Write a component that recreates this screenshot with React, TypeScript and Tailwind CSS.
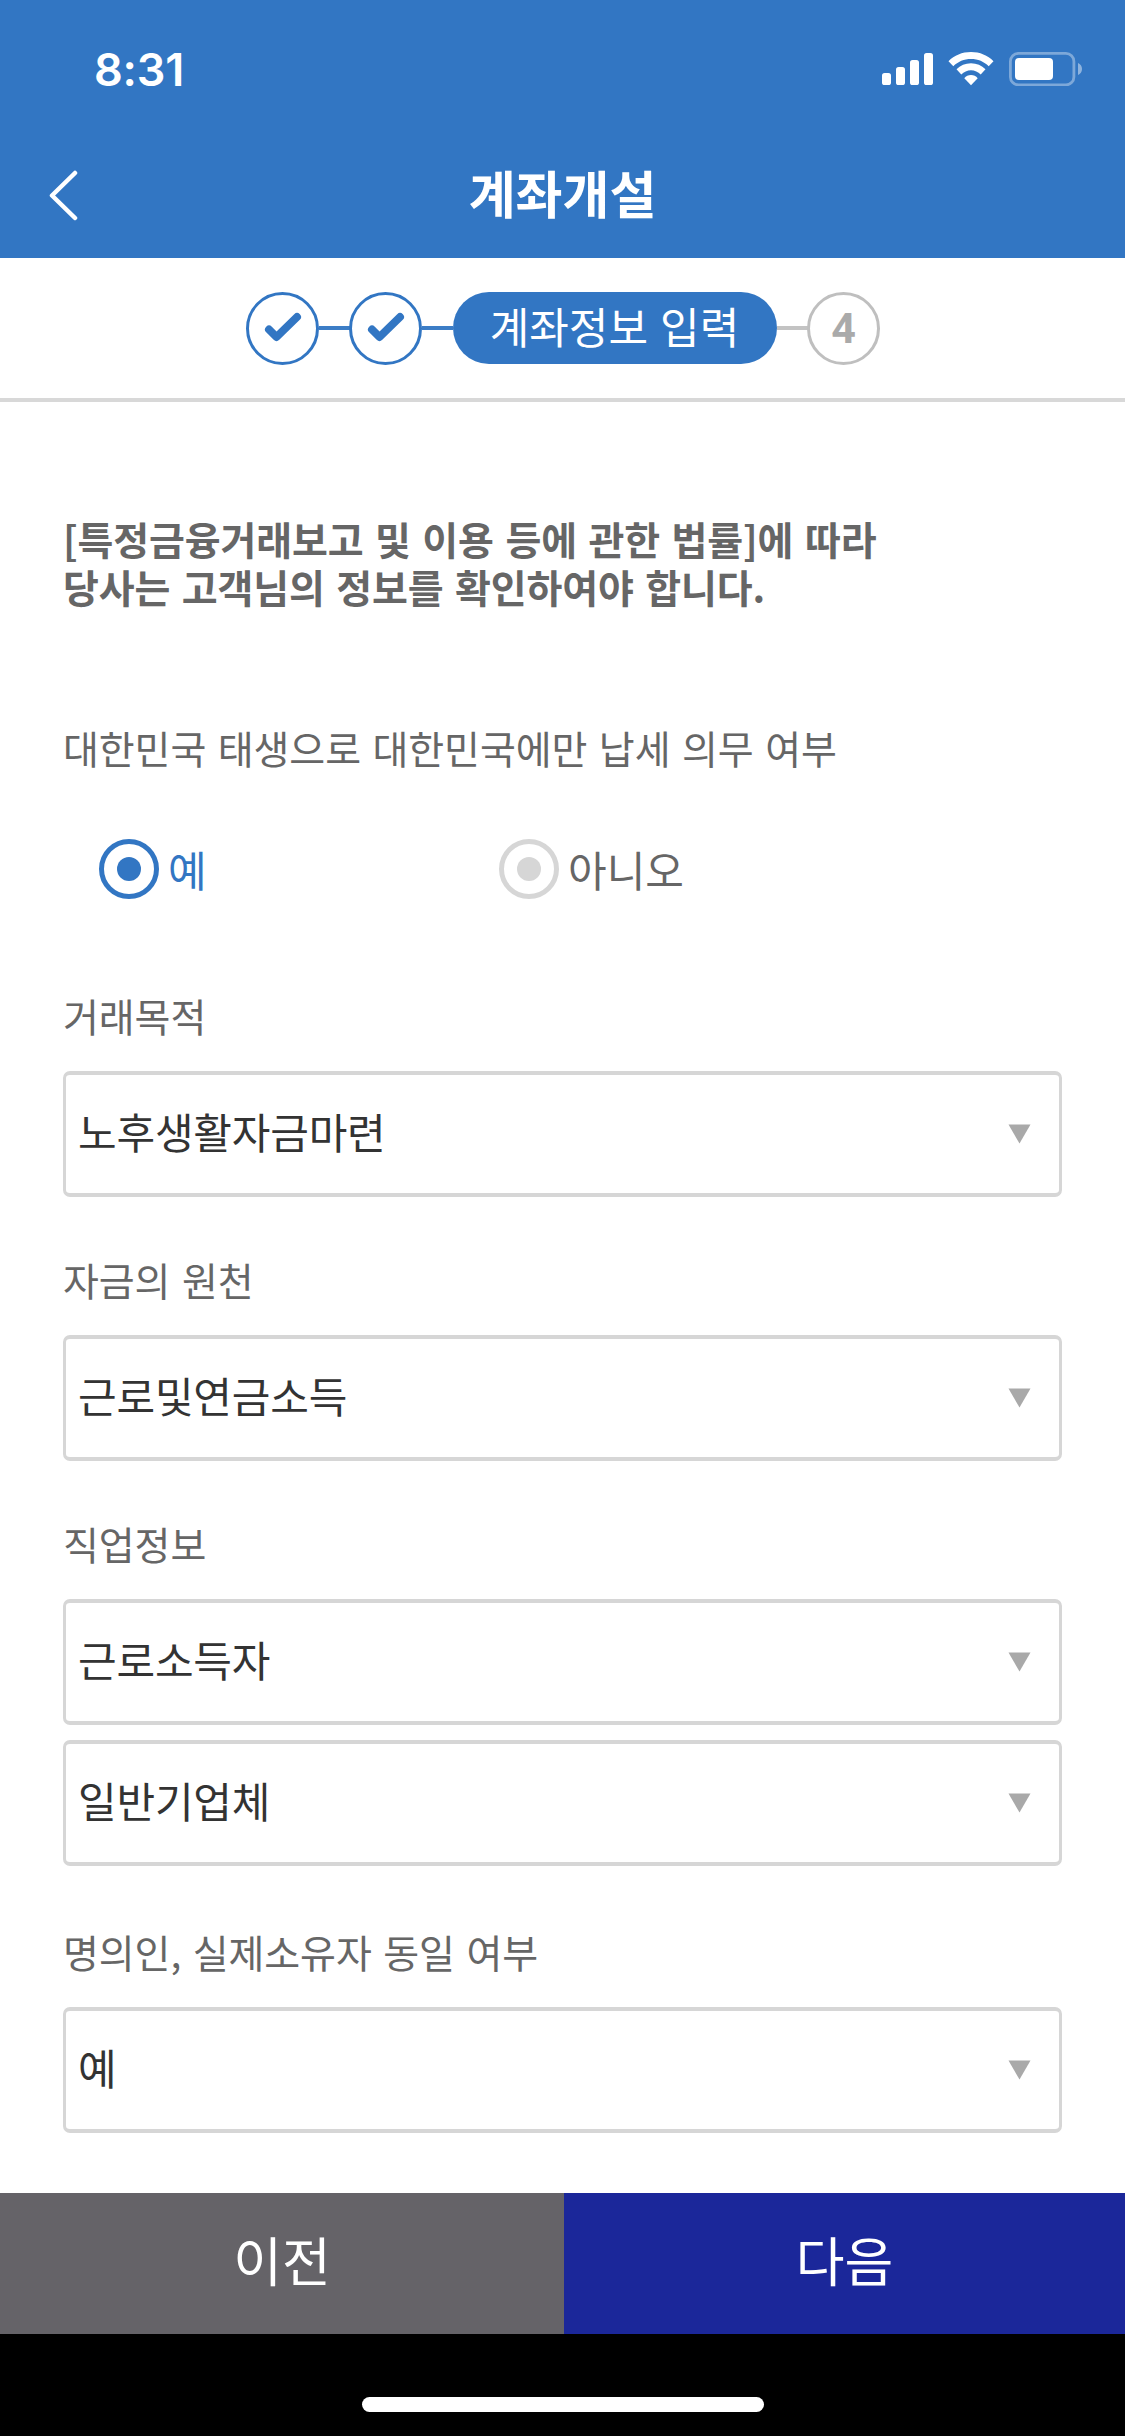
import type { ReactNode } from "react";

function StatusBar() {
  return (
    <div className="flex h-[138px] items-center pl-[94px] pr-[43px]">
      <div className="flex-1 font-['Inter'] text-[45px] font-semibold leading-none tracking-[-0.2px]">8:31</div>
      <svg width="200" height="34" viewBox="0 0 200 34" fill="#fff">
        <rect x="0" y="21" width="9" height="12" rx="2.6" />
        <rect x="14" y="15" width="9" height="18" rx="2.6" />
        <rect x="28" y="8" width="9" height="25" rx="2.6" />
        <rect x="42" y="1" width="9" height="32" rx="2.6" />
        <g transform="translate(66.5 0)">
          <path d="M22.5 0C31.300 0 39.200 3.300 45 9.200L40.200 14.200C35.600 9.600 29.400 7 22.500 7S9.400 9.600 4.800 14.200L0 9.200C5.800 3.300 13.700 0 22.500 0Z" />
          <path d="M22.500 11.200C28.100 11.200 33.200 13.400 37 17.300L32.200 22.500C29.600 20 26.200 18.300 22.500 18.300S15.400 20 12.800 22.500L8 17.300C11.800 13.400 16.900 11.200 22.500 11.200Z" />
          <path d="M22.500 23C25.200 23 27.500 24.200 29.200 26.200L22.500 33.200L15.800 26.200C17.500 24.200 19.800 23 22.500 23Z" />
        </g>
        <rect x="128.400" y="1.400" width="63.500" height="31.500" rx="8" fill="none" stroke="#fff" strokeOpacity=".37" strokeWidth="2.800" />
        <rect x="133" y="6" width="38" height="22" rx="4" />
        <path d="M196 11C198.400 12 200 14.300 200 17S198.400 22 196 23Z" fillOpacity=".45" />
      </svg>
    </div>
  );
}

function DoneStep() {
  return (
    <>
      <div className="flex size-[73px] -mx-[0.5px] items-center justify-center rounded-full border-[3.500px] border-[#3276c3]">
        <svg width="38" height="32" viewBox="0 0 38 32" fill="none" stroke="#3276c3" strokeWidth="8" strokeLinecap="round" strokeLinejoin="round">
          <path d="M5 17.500L12.500 25L33 5" />
        </svg>
      </div>
      <div className="h-[4px] w-[31px] bg-[#3c7dc6]" />
    </>
  );
}

function Radio({ label, checked }: { label: string; checked?: boolean }) {
  return (
    <div className={checked ? "flex w-[400px] text-[#3276c3]" : "flex text-[#666]"}>
      <span className={checked ? "flex size-[60px] items-center justify-center rounded-full border-[5px] border-[#3276c3]" : "flex size-[60px] items-center justify-center rounded-full border-[5px] border-[#d6d6d6]"}>
        <span className={checked ? "size-6 rounded-full bg-[#3276c3]" : "size-6 rounded-full bg-[#d6d6d6]"} />
      </span>
      <span className="ml-[9px] text-[42px] leading-[60px]">{label}</span>
    </div>
  );
}

function Label({ children, className }: { children: ReactNode; className: string }) {
  return <div className={"h-12 text-[39px] leading-[44px] tracking-[-0.080px] text-[#666] [word-spacing:2.900px] " + className}>{children}</div>;
}

function Select({ value }: { value: string }) {
  return (
    <div className="flex h-[126px] w-[999px] items-center justify-between rounded-[7px] border-x-[3px] border-y-4 border-[#d6d6d6] pl-[12px] pr-[28px]">
      <span className="-mt-[7px] text-[42px] leading-[60px] tracking-[-0.200px] text-[#333]">{value}</span>
      <svg width="23" height="20" viewBox="0 0 23 20" fill="#a9a9a9">
        <path d="M.5 .5H22.500L11.500 19.500Z" />
      </svg>
    </div>
  );
}

export default function App() {
  return (
    <div className="flex h-[2436px] w-[1125px] flex-col overflow-hidden bg-white font-['Noto_Sans_CJK_KR',sans-serif]">
      <header className="h-[258px] bg-[#3276c3] text-white">
        <StatusBar />
        <div className="flex h-[115px] items-center pl-[48px] pr-[79px]">
          <svg className="-mt-px" width="31" height="52" viewBox="0 0 31 52" fill="none" stroke="#fff" strokeWidth="4.500" strokeLinecap="round" strokeLinejoin="round">
            <path d="M27 4L4 26.500L27 49" />
          </svg>
          <h1 className="-mt-[8px] flex-1 text-center text-[51px] font-bold leading-[60px]">계좌개설</h1>
        </div>
      </header>

      <div className="flex h-[144px] items-center justify-center border-b-4 border-[#d8d8d8] pl-px">
        <DoneStep />
        <DoneStep />
        <div className="flex h-[72px] w-[324px] justify-center rounded-full bg-[#3276c3] text-[43px] leading-[66px] text-white [word-spacing:2.500px]">계좌정보 입력</div>
        <div className="h-[4px] w-[31px] bg-[#c3c3c3]" />
        <div className="flex size-[73px] -mx-[0.5px] items-center justify-center rounded-full border-[3.500px] border-[#bfbfbf] pt-px font-['Roboto'] text-[43px] font-bold leading-none text-[#aaa]">4</div>
      </div>

      <main className="flex-1 pl-[63px]">
        <p className="-mb-[3px] mt-[112px] pb-[3px] text-[39px] font-bold leading-[48px] tracking-[-0.150px] text-[#666] [word-spacing:2.900px]">
          [특정금융거래보고 및 이용 등에 관한 법률]에 따라
          <br />
          당사는 고객님의 정보를 확인하여야 합니다.
        </p>
        <Label className="mt-[115px]">대한민국 태생으로 대한민국에만 납세 의무 여부</Label>
        <div className="mt-[66px] flex h-[60px] pl-9">
          <Radio label="예" checked />
          <Radio label="아니오" />
        </div>
        <Label className="mt-[94px]">거래목적</Label>
        <div className="mt-[30px]"><Select value="노후생활자금마련" /></div>
        <Label className="mt-[60px]">자금의 원천</Label>
        <div className="mt-[30px]"><Select value="근로및연금소득" /></div>
        <Label className="mt-[60px]">직업정보</Label>
        <div className="mt-[30px] flex flex-col gap-[15px]">
          <Select value="근로소득자" />
          <Select value="일반기업체" />
        </div>
        <Label className="mt-[63px]">명의인, 실제소유자 동일 여부</Label>
        <div className="mt-[30px]"><Select value="예" /></div>
      </main>

      <footer>
        <div className="flex h-[141px] text-[53px] leading-[132px] text-white">
          <div className="w-[564px] bg-[#656368] text-center">이전</div>
          <div className="flex-1 bg-[#1b279a] text-center">다음</div>
        </div>
        <div className="flex h-[102px] items-start justify-center bg-black pt-[63px]">
          <div className="h-[15px] w-[402px] rounded-full bg-white" />
        </div>
      </footer>
    </div>
  );
}
